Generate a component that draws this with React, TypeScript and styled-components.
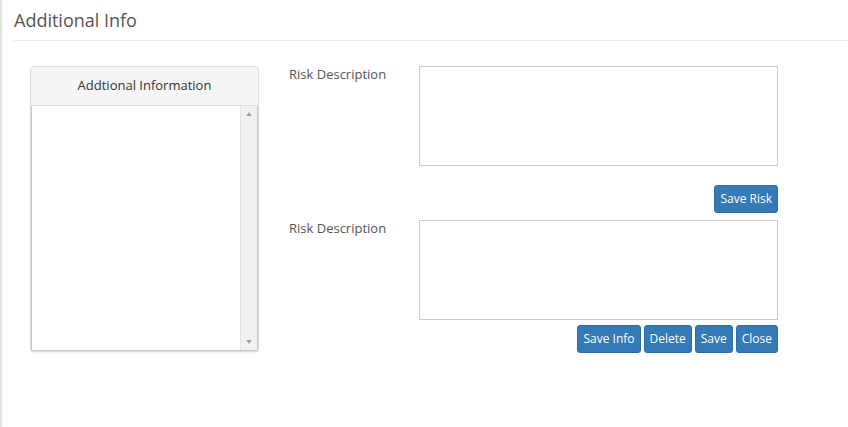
import React from "react";
import styled, { createGlobalStyle } from "styled-components";

const Global = createGlobalStyle`
  html, body { margin: 0; padding: 0; background: #fff; }
  body { font-family: "Open Sans", "Liberation Sans", sans-serif; color: #555; }
  * { box-sizing: border-box; }
`;

const Page = styled.div`
  width: 848px;
  height: 427px;
  border-left: 2px solid #e3e3e3;
  overflow: hidden;
`;

const Header = styled.div`
  margin-left: 12px;
  height: 41px;
  border-bottom: 1px solid #e8e8e8;
  display: flex;
  align-items: flex-start;
`;

const Title = styled.h1`
  margin: 0;
  padding-top: 7px;
  font-size: 18px;
  line-height: 26px;
  font-weight: 400;
  color: #555;
`;

const Content = styled.div`
  display: flex;
  align-items: flex-start;
  padding: 25px 0 0 28px;
`;

const Panel = styled.div`
  width: 229px;
  height: 286px;
  border: 1px solid #ddd;
  border-radius: 4px;
  box-shadow: 0 1px 2px rgba(0, 0, 0, 0.08);
  display: flex;
  flex-direction: column;
  background: #fff;
`;

const PanelHeading = styled.div`
  height: 39px;
  padding-bottom: 2px;
  background: #f5f5f5;
  border-bottom: 1px solid #ddd;
  border-radius: 4px 4px 0 0;
  display: flex;
  align-items: center;
  justify-content: center;
  font-size: 13px;
  color: #333;
`;

const ListBox = styled.div`
  flex: 1;
  display: flex;
  border: 1px solid #c8c8c8;
  border-top: none;
`;

const ListArea = styled.div`
  flex: 1;
`;

const ScrollBar = styled.div`
  width: 17px;
  background: #f1f1f1;
  border-left: 1px solid #e4e4e4;
  display: flex;
  flex-direction: column;
  justify-content: space-between;
  align-items: center;
  padding: 6px 0;
`;

const Arrow = styled.div<{ $down?: boolean }>`
  width: 0;
  height: 0;
  border-left: 3.5px solid transparent;
  border-right: 3.5px solid transparent;
  ${(p) =>
    p.$down
      ? "border-top: 4px solid #a3a3a3;"
      : "border-bottom: 4px solid #a3a3a3;"}
`;

const Form = styled.div`
  margin-left: 30px;
  width: 489px;
  display: flex;
  flex-direction: column;
`;

const FieldRow = styled.div<{ $mt?: number }>`
  display: flex;
  margin-top: ${(p) => p.$mt ?? 0}px;
`;

const Label = styled.label`
  width: 130px;
  font-size: 13px;
  line-height: 16px;
  color: #555;
`;

const TextArea = styled.textarea`
  width: 359px;
  height: 100px;
  border: 1px solid #ccc;
  resize: none;
  font-family: inherit;
  outline: none;
  margin: 0;
`;

const ButtonRow = styled.div<{ $mt: number }>`
  display: flex;
  justify-content: flex-end;
  gap: 3px;
  margin-top: ${(p) => p.$mt}px;
`;

const Button = styled.button`
  height: 28px;
  padding: 0 5px;
  background: #337ab7;
  border: 1px solid #2e6da4;
  border-radius: 3px;
  color: #fff;
  font-family: "Open Sans", "Liberation Sans", sans-serif;
  font-size: 12px;
  line-height: 18px;
  cursor: pointer;
`;

export default function App() {
  return (
    <>
      <Global />
      <Page>
        <Header>
          <Title>Additional Info</Title>
        </Header>
        <Content>
          <Panel>
            <PanelHeading>Addtional Information</PanelHeading>
            <ListBox>
              <ListArea />
              <ScrollBar>
                <Arrow />
                <Arrow $down />
              </ScrollBar>
            </ListBox>
          </Panel>
          <Form>
            <FieldRow>
              <Label>Risk Description</Label>
              <TextArea />
            </FieldRow>
            <ButtonRow $mt={19}>
              <Button>Save Risk</Button>
            </ButtonRow>
            <FieldRow $mt={7}>
              <Label>Risk Description</Label>
              <TextArea />
            </FieldRow>
            <ButtonRow $mt={5}>
              <Button>Save Info</Button>
              <Button>Delete</Button>
              <Button>Save</Button>
              <Button>Close</Button>
            </ButtonRow>
          </Form>
        </Content>
      </Page>
    </>
  );
}
